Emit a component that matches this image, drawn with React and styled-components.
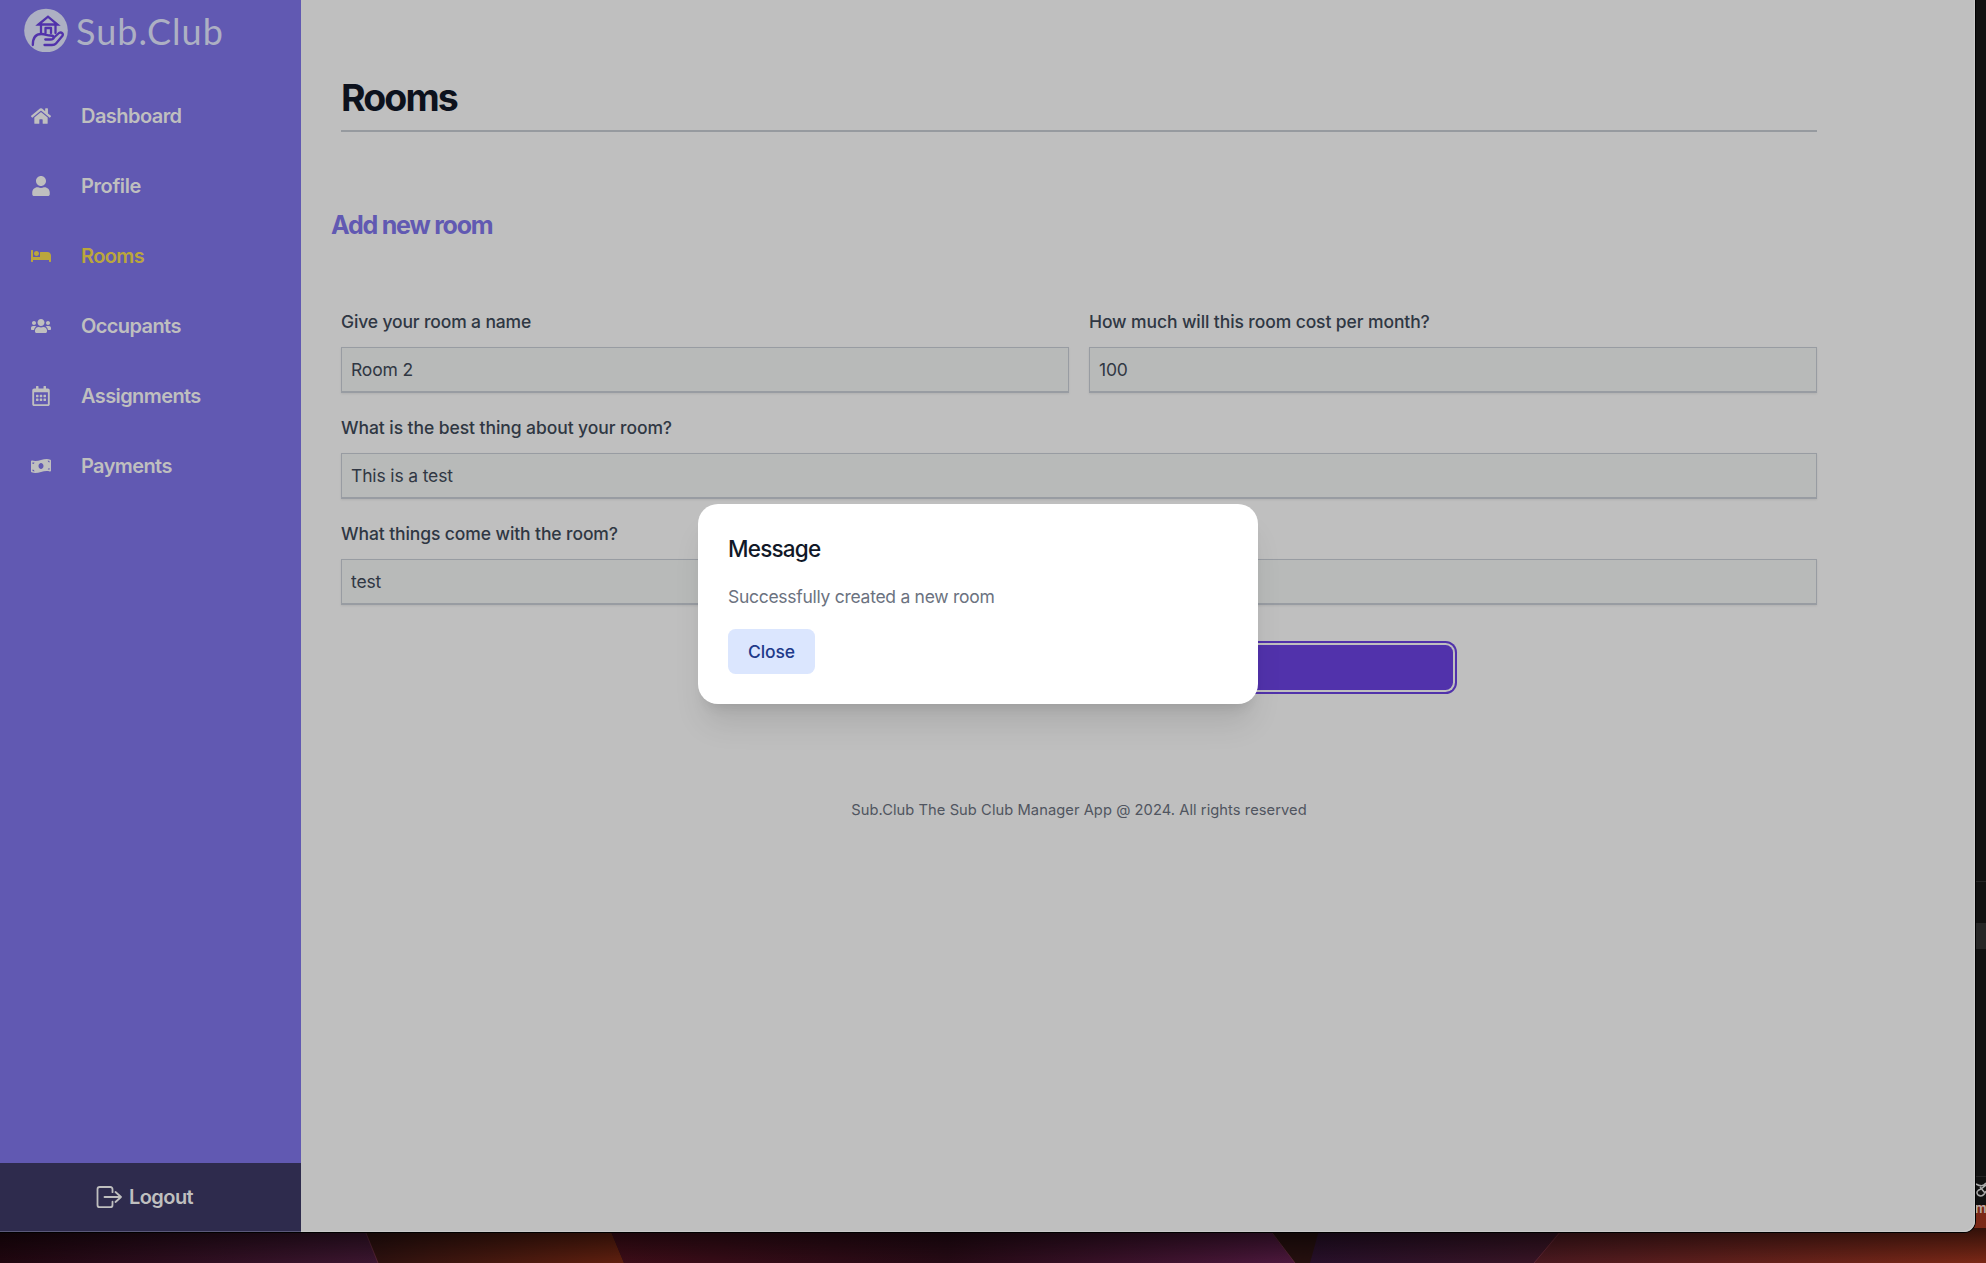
import React from "react";
import styled, { createGlobalStyle } from "styled-components";
import { FaHome, FaUser, FaBed, FaUsers, FaRegCalendarAlt, FaMoneyBillWave } from "react-icons/fa";

const Global = createGlobalStyle`
  *, *::before, *::after { box-sizing: border-box; }
  body { margin: 0; background: #101010; font-family: Inter, "Liberation Sans", sans-serif; -webkit-font-smoothing: antialiased; }
  h1, h2, h3, p { margin: 0; }
  button, input { font: inherit; }
`;

const Desktop = styled.div`
  position: relative;
  width: 1986px;
  height: 1263px;
  overflow: hidden;
`;

const Wallpaper = styled.svg`
  position: absolute;
  inset: 0;
  display: block;
`;

const Window = styled.div`
  position: relative;
  display: flex;
  width: 1975px;
  height: 1232px;
  background: #bfbfbf;
  border-radius: 0 0 11px 0;
  box-shadow: 0 0 0 1px #000, inset -1px -1px 0 #c9c9c9;
  overflow: hidden;
`;

const Sidebar = styled.aside`
  display: flex;
  flex-direction: column;
  flex: 0 0 301px;
  background: #6159b2;
`;

const Brand = styled.div`
  display: flex;
  align-items: flex-start;
  gap: 8px;
  height: 81px;
  padding: 8px 0 0 24px;
  color: #adb0c3;
`;

const BrandName = styled.span`
  font-family: Lato, sans-serif;
  font-size: 36px;
  line-height: 46px;
  letter-spacing: 1px;
  white-space: nowrap;
`;

const Nav = styled.nav`
  display: flex;
  flex-direction: column;
  flex: 1;
`;

const NavItem = styled.a`
  display: flex;
  align-items: center;
  gap: 30px;
  height: 70px;
  padding-left: 31px;
  color: ${(p) => (p.$active ? "#bba63c" : "#bfbfbf")};
  font-size: 20px;
  font-weight: 600;
  letter-spacing: ${(p) => p.$track}px;
`;

const Logout = styled.button`
  display: flex;
  align-items: center;
  justify-content: center;
  gap: 7px;
  height: 69px;
  padding: 0 12px 0 0;
  border: 0;
  border-bottom: 1px solid #5b597a;
  background: #2e2b4d;
  color: #bfbfbf;
  font-size: 20px;
  font-weight: 600;
  letter-spacing: -0.55px;
`;

const Main = styled.main`
  display: flex;
  flex-direction: column;
  width: 1556px;
  padding: 75px 40px 0;
`;

const PageTitle = styled.h1`
  padding-bottom: 10px;
  border-bottom: 2px solid #969a9f;
  color: #0d121d;
  font-size: 37.5px;
  line-height: 45px;
  font-weight: 700;
  letter-spacing: -1.9px;
`;

const SectionTitle = styled.h2`
  margin: 76px 0 0 -10px;
  color: #6159b2;
  font-size: 25px;
  line-height: 35px;
  font-weight: 700;
  letter-spacing: -1.2px;
`;

const Form = styled.form`
  display: grid;
  grid-template-columns: 1fr 1fr;
  gap: 22px 20px;
  margin-top: 66px;
`;

const Field = styled.label`
  display: flex;
  flex-direction: column;
  gap: 13px;
  grid-column: ${(p) => (p.$wide ? "1 / -1" : "auto")};
  color: #2f3743;
  font-size: 17.5px;
  line-height: 25px;
  font-weight: 500;
  letter-spacing: ${(p) => p.$track}px;
`;

const Input = styled.input`
  height: 46px;
  padding: 0 9px;
  border: 1px solid #989ca2;
  border-bottom-width: 2px;
  border-radius: 0;
  outline: 0;
  background: #b8bab9;
  box-shadow: 0 1px 2px rgba(0, 0, 0, 0.08);
  color: #303743;
  font-weight: 400;
  letter-spacing: -0.15px;
`;

const Submit = styled.button`
  grid-column: 1 / -1;
  justify-self: center;
  width: 748px;
  height: 45px;
  margin-top: 18px;
  border: 0;
  border-radius: 7.5px;
  background: #5132ab;
  box-shadow: 0 0 0 2px #bfbfbf, 0 0 0 4px #5132ab;
`;

const Footer = styled.footer`
  margin-top: 110px;
  color: #505560;
  font-size: 14.7px;
  line-height: 20px;
  letter-spacing: 0.06px;
  text-align: center;
`;

const Overlay = styled.div`
  position: absolute;
  top: 0;
  left: 0;
  display: flex;
  align-items: center;
  justify-content: center;
  width: 1956px;
  height: 1208px;
`;

const Dialog = styled.section`
  display: flex;
  flex-direction: column;
  align-items: flex-start;
  gap: 20px;
  width: 560px;
  height: 200px;
  padding: 30px;
  border-radius: 20px;
  background: #fff;
  box-shadow: 0 25px 31px -6px rgba(0, 0, 0, 0.1), 0 10px 12px -7px rgba(0, 0, 0, 0.1);
`;

const DialogTitle = styled.h3`
  color: #111827;
  font-size: 22.5px;
  line-height: 30px;
  font-weight: 500;
  letter-spacing: -0.78px;
`;

const DialogText = styled.p`
  height: 25px;
  color: #6b7280;
  font-size: 17.5px;
  line-height: 25px;
  letter-spacing: -0.28px;
`;

const CloseButton = styled.button`
  width: 87px;
  height: 45px;
  padding: 0;
  border: 0;
  border-radius: 7.5px;
  background: #dbe6fe;
  color: #1e3a8a;
  font-size: 17.5px;
  font-weight: 500;
  letter-spacing: -0.1px;
`;

const LogoMark = () => (
  <svg width="44" height="44" viewBox="0 0 44 44" fill="none">
    <circle cx="22" cy="22.5" r="21.8" fill="#adb0c3" />
    <g stroke="#5132ab" strokeWidth="2.3" strokeLinejoin="round" strokeLinecap="round">
      <path d="M14.5 16.500L24 8.700L33.500 16.500Z" strokeLinejoin="miter" />
      <path d="M17 17v8M31.500 17v8M21.500 25v-5h5.500v5" />
      <path d="M8.8 37c0-7.500 2.500-11 8.500-11 5 0 5 1.500 9 1.500 4.500 0 4.500 4 0 4h-5" />
      <path d="M30 29.500l5-4.500c2.500-1.500 4.800.8 3.300 3L32 35.500c-1 1.200-2.500 1.500-4 1.500h-7.500" />
    </g>
  </svg>
);

const LogoutIcon = () => (
  <svg width="26" height="24" viewBox="0 0 26 24" fill="none" stroke="currentColor" strokeWidth="1.8" strokeLinecap="round" strokeLinejoin="round">
    <path d="M16.500 7.200V4.300Q16.500 2 14.200 2H3.800Q1.500 2 1.500 4.300V19.900Q1.500 22.200 3.800 22.200H14.200Q16.500 22.200 16.500 19.900V16.700M8.500 12H25M19.500 7L25 12L19.500 17" />
  </svg>
);

const NAV = [
  { label: "Dashboard", icon: FaHome, track: -0.55 },
  { label: "Profile", icon: FaUser, track: -0.4 },
  { label: "Rooms", icon: FaBed, track: -0.6, active: true },
  { label: "Occupants", icon: FaUsers, track: -0.6 },
  { label: "Assignments", icon: FaRegCalendarAlt, track: -0.6 },
  { label: "Payments", icon: FaMoneyBillWave, track: -0.6 },
];

const FIELDS = [
  { label: "Give your room a name", value: "Room 2", track: -0.14 },
  { label: "How much will this room cost per month?", value: "100", track: -0.1 },
  { label: "What is the best thing about your room?", value: "This is a test", wide: true, track: -0.07 },
  { label: "What things come with the room?", value: "test", wide: true, track: -0.1 },
];

const Backdrop = () => (
  <Wallpaper width="1986" height="1263" viewBox="0 0 1986 1263">
    <defs>
      <linearGradient id="w1"><stop stopColor="#20060f" /><stop offset="1" stopColor="#3c1630" /></linearGradient>
      <linearGradient id="w2"><stop stopColor="#2a100f" /><stop offset="1" stopColor="#61200f" /></linearGradient>
      <linearGradient id="w3"><stop stopColor="#3f0d18" /><stop offset=".5" stopColor="#260a15" /><stop offset="1" stopColor="#4d183d" /></linearGradient>
      <linearGradient id="w4"><stop stopColor="#28102a" /><stop offset="1" stopColor="#3b1524" /></linearGradient>
      <linearGradient id="w5"><stop stopColor="#4b1920" /><stop offset="1" stopColor="#7b2816" /></linearGradient>
      <linearGradient id="shade" x2="0" y2="1"><stop stopOpacity=".6" /><stop offset="1" stopOpacity="0" /></linearGradient>
    </defs>
    <rect y="1205" width="1986" height="58" fill="#26100f" />
    <path d="M0 1205H355L378 1263H0Z" fill="url(#w1)" />
    <path d="M355 1205H600L624 1263H378Z" fill="url(#w2)" />
    <path d="M600 1205H1250L1295 1263H624Z" fill="url(#w3)" />
    <path d="M1326 1205H1580L1534 1263H1310Z" fill="url(#w4)" />
    <path d="M1580 1205H1986V1263H1534Z" fill="url(#w5)" />
    <path d="M364 1228L378 1263M1270 1230L1295 1263M1562 1230L1534 1263" stroke="#743149" opacity=".6" />
    <rect y="1228" width="1986" height="35" fill="url(#shade)" />
    <rect x="1975" width="11" height="1203" fill="#111" />
    <rect x="1975" y="923" width="11" height="26" fill="#262626" />
    <rect x="1975" y="881" width="11" height="1" fill="#242424" />
    <rect x="1975" y="1176" width="11" height="1" fill="#242424" />
    <g fill="none" stroke="#aaa" strokeWidth="1.500">
      <path d="M1976 1184q7 4 10-1M1978 1195q-3-4 3-6l5-4M1978 1195q5 3 8-4M1980 1187l5 6" />
    </g>
    <text x="1975" y="1213" fill="#b8aaa5" fontFamily="Inter, sans-serif" fontSize="13" fontWeight="600">m</text>
  </Wallpaper>
);

export default function App() {
  return (
    <>
      <Global />
      <Desktop>
        <Backdrop />
        <Window>
          <Sidebar>
            <Brand>
              <LogoMark />
              <BrandName>Sub.Club</BrandName>
            </Brand>
            <Nav>
              {NAV.map(({ label, icon: Icon, track, active }) => (
                <NavItem key={label} $track={track} $active={active}>
                  <Icon size={20} />
                  {label}
                </NavItem>
              ))}
            </Nav>
            <Logout>
              <LogoutIcon />
              Logout
            </Logout>
          </Sidebar>
          <Main>
            <PageTitle>Rooms</PageTitle>
            <SectionTitle>Add new room</SectionTitle>
            <Form>
              {FIELDS.map((f) => (
                <Field key={f.label} $wide={f.wide} $track={f.track}>
                  {f.label}
                  <Input defaultValue={f.value} />
                </Field>
              ))}
              <Submit type="button" />
            </Form>
            <Footer>Sub.Club The Sub Club Manager App @ 2024. All rights reserved</Footer>
          </Main>
          <Overlay>
            <Dialog>
              <DialogTitle>Message</DialogTitle>
              <DialogText>Successfully created a new room</DialogText>
              <CloseButton>Close</CloseButton>
            </Dialog>
          </Overlay>
        </Window>
      </Desktop>
    </>
  );
}
